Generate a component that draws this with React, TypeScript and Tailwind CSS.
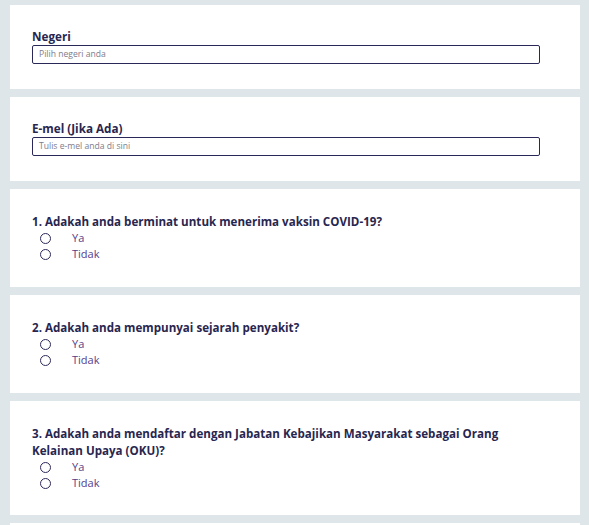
import React from "react";

const font = { fontFamily: "'Open Sans', 'Liberation Sans', sans-serif" };

function TextCard({ label, placeholder }: { label: string; placeholder: string }) {
  return (
    <div className="bg-white px-[22px] pt-[23px] pb-[25px]">
      <div className="text-[11.7px] leading-[16px] font-bold text-[#28264f]">{label}</div>
      <div className="mt-[1px] w-[508px] h-[19px] border-[1.5px] border-[#2a2858] rounded-[2px] flex items-center px-[6px]">
        <span className="text-[8.6px] text-[#7c7c8c]">{placeholder}</span>
      </div>
    </div>
  );
}

function RadioCard({ question, pb }: { question: React.ReactNode; pb: string }) {
  return (
    <div className={`bg-white px-[22px] pt-[24px] ${pb}`}>
      <div className="text-[11.6px] leading-[17px] font-bold text-[#28264f]">{question}</div>
      {["Ya", "Tidak"].map((o) => (
        <div key={o} className="flex items-center h-[16px]">
          <span className="ml-[8px] w-[11px] h-[11px] rounded-full border-[1.5px] border-[#2d2a5a]" />
          <span className="ml-[21px] text-[11px] text-[#55408a]">{o}</span>
        </div>
      ))}
    </div>
  );
}

export default function App() {
  return (
    <div className="h-[525px] overflow-hidden bg-[#dfe6e9] pt-[5px] pl-[10px] pr-[9px] flex flex-col gap-[8px]" style={font}>
      <TextCard label="Negeri" placeholder="Pilih negeri anda" />
      <TextCard label="E-mel (Jika Ada)" placeholder="Tulis e-mel anda di sini" />
      <RadioCard pb="pb-[25px]" question="1. Adakah anda berminat untuk menerima vaksin COVID-19?" />
      <RadioCard pb="pb-[25px]" question="2. Adakah anda mempunyai sejarah penyakit?" />
      <RadioCard
        pb="pb-[24px]"
        question={
          <>
            3. Adakah anda mendaftar dengan Jabatan Kebajikan Masyarakat sebagai Orang
            <br />
            Kelainan Upaya (OKU)?
          </>
        }
      />
      <div className="bg-white h-[2px] shrink-0" />
    </div>
  );
}
